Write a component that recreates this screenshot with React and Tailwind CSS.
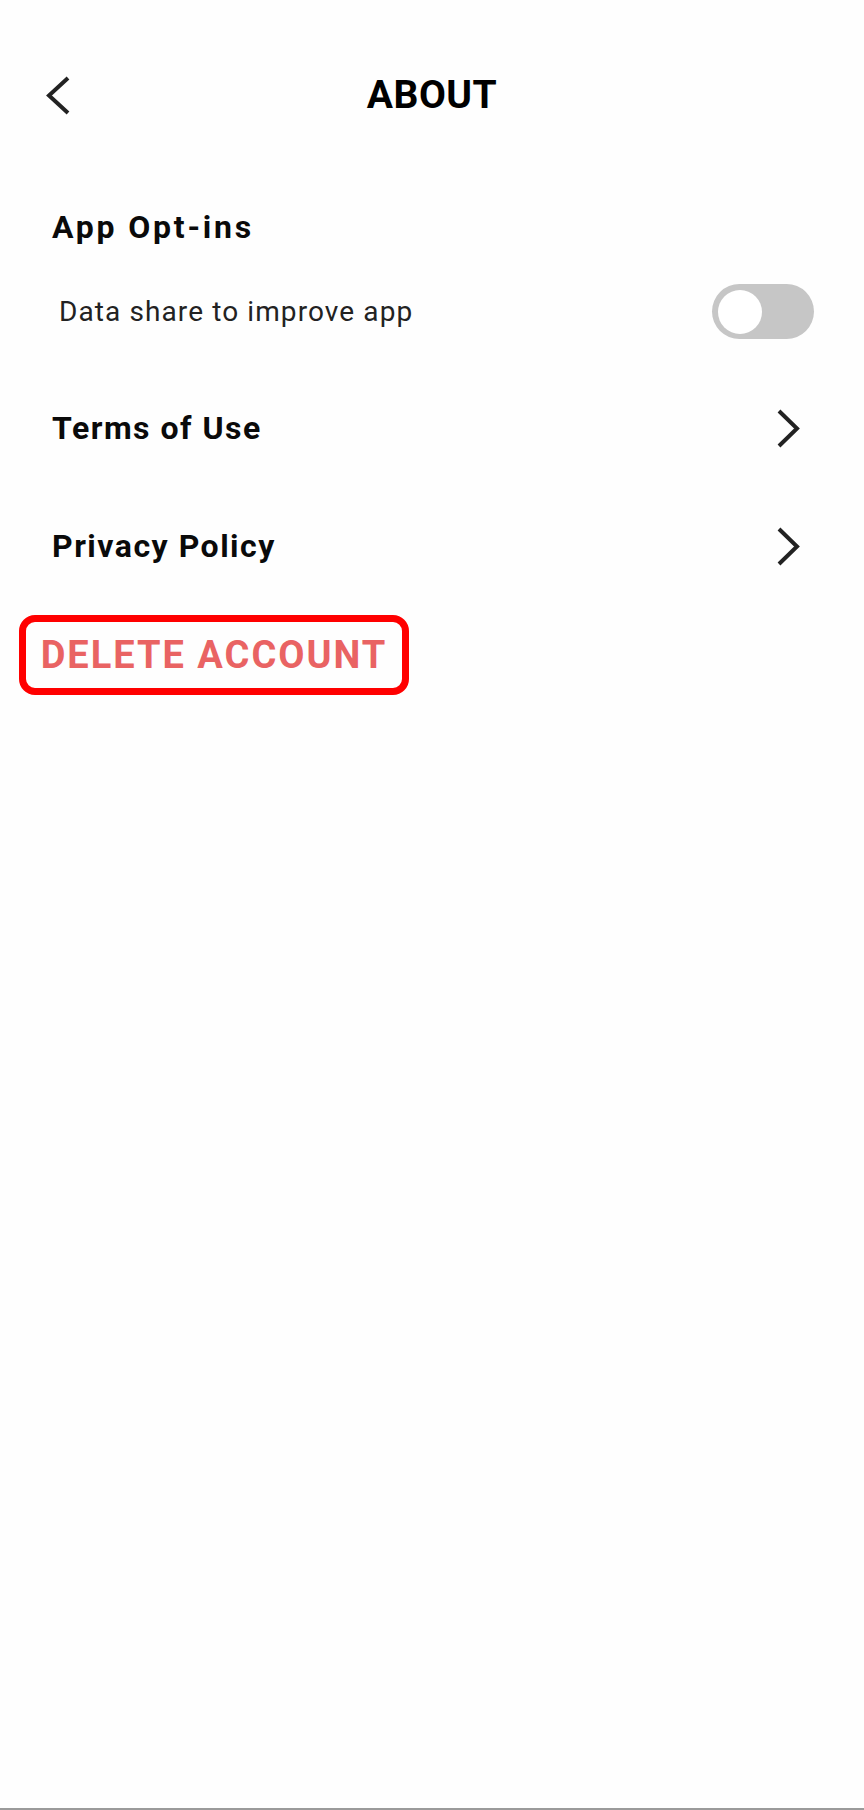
import React, { useState } from "react";

function Chevron({ dir = "right" }) {
  const d = dir === "left" ? "M23 3 L4 20.5 L23 38" : "M3 3 L21 20.5 L3 38";
  return (
    <svg width="26" height="41" viewBox="0 0 26 41" fill="none">
      <path d={d} stroke="#222" strokeWidth="4" strokeLinecap="butt" strokeLinejoin="miter" />
    </svg>
  );
}

function Toggle({ on, onChange }) {
  return (
    <button
      onClick={() => onChange(!on)}
      className="w-[102px] h-[55px] rounded-full bg-[#c6c6c6] flex items-center px-[6px]"
    >
      <span className="w-[44px] h-[44px] rounded-full bg-white" />
    </button>
  );
}

function LinkRow({ label }) {
  return (
    <div className="flex items-center justify-between h-[80px] pl-[52px] pr-[62px]">
      <span className="text-[32px] font-bold tracking-[1.5px] text-[#0a0a0a]">{label}</span>
      <Chevron />
    </div>
  );
}

export default function App() {
  const [share, setShare] = useState(false);

  return (
    <div
      className="h-[1810px] bg-[#fefefe] border-b-2 border-[#9a9a9a] flex flex-col"
      style={{ fontFamily: "Roboto, 'Noto Sans', sans-serif" }}
    >
      <div className="mt-[63px] h-[64px] grid grid-cols-[1fr_auto_1fr] items-center">
        <div className="pl-[45px] flex items-center">
          <Chevron dir="left" />
        </div>
        <h1 className="text-[39px] font-bold leading-none text-black tracking-[0.5px]">ABOUT</h1>
        <div />
      </div>

      <h2 className="mt-[80px] pl-[52px] h-[40px] leading-[40px] text-[32px] font-bold tracking-[2.8px] text-[#0a0a0a]">
        App Opt-ins
      </h2>

      <div className="mt-[37px] flex items-center justify-between pl-[59px] pr-[50px]">
        <span className="text-[28px] text-[#222] tracking-[1.1px]">
          Data share to improve app
        </span>
        <Toggle on={share} onChange={setShare} />
      </div>

      <div className="mt-[49px]">
        <LinkRow label="Terms of Use" />
      </div>
      <div className="mt-[38px]">
        <LinkRow label="Privacy Policy" />
      </div>

      <div className="mt-[29px] pl-[19px]">
        <button className="w-[390px] h-[80px] border-[7px] border-[#ff0000] rounded-[16px] flex items-center justify-center">
          <span className="text-[38px] font-bold tracking-[2px] text-[#e96363] leading-none">
            DELETE ACCOUNT
          </span>
        </button>
      </div>
    </div>
  );
}
